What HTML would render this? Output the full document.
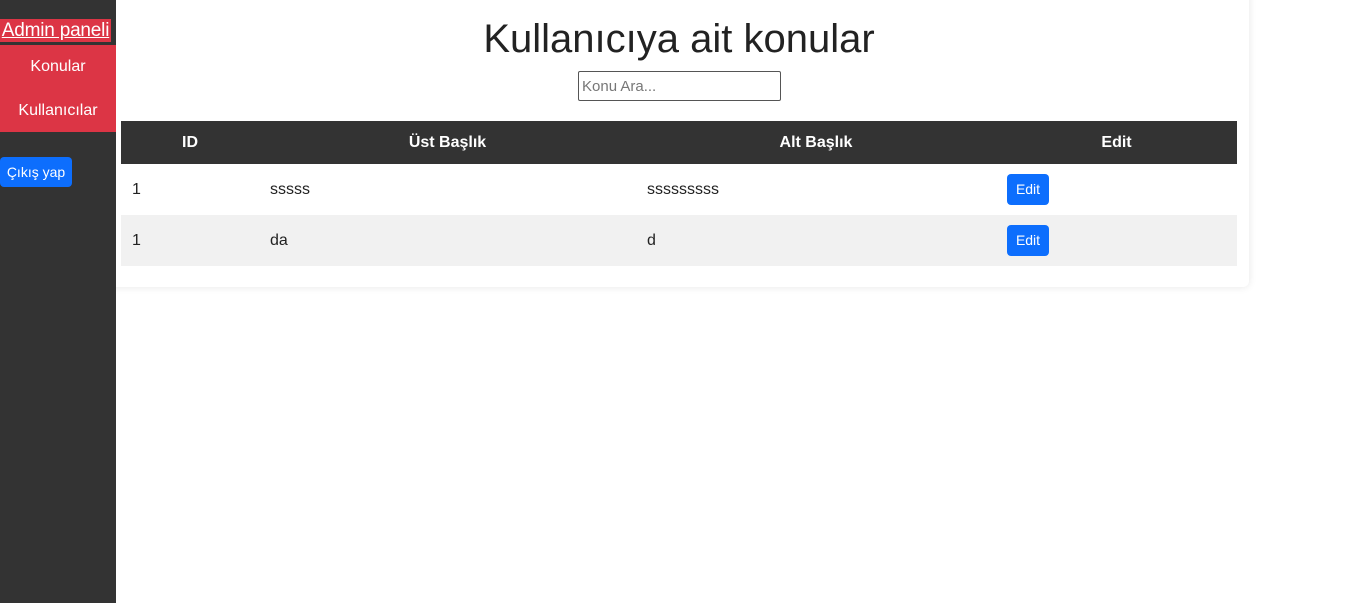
<!DOCTYPE html>
<html><head><style>
body{margin:0;width:1358px;height:603px;background:#fff;font-family:"Liberation Sans",Arial,sans-serif;position:relative;overflow:hidden}
.side{position:absolute;left:0;top:0;width:116px;height:603px;background:#333}
.adm{position:absolute;left:0;top:19px;width:111px;height:23px;background:#dc3545;color:#fff;font-size:19px;text-decoration:underline;line-height:23px;white-space:nowrap;text-align:center;letter-spacing:-0.2px}
.menu{position:absolute;left:0;top:45px;width:116px;height:87px;background:#dc3545}
.menu div{color:#fff;font-size:16px;text-align:center;height:44px;line-height:44px}
.btn{position:absolute;background:#0d6efd;color:#fff;border-radius:4px;font-size:14px;text-align:center}
.card{position:absolute;left:108px;top:-10px;width:1141px;height:297px;background:#fff;border-radius:6px;box-shadow:0 0 8px rgba(0,0,0,.1)}
h1{position:absolute;left:116px;width:1126px;top:17px;margin:0;text-align:center;font-weight:normal;font-size:40px;color:#222}
input{position:absolute;left:578px;top:71px;box-sizing:border-box;width:203px;height:30px;border:1px solid #555;border-radius:2px;font-size:15px;padding:2px 3px;font-family:"Liberation Sans",sans-serif}
input::placeholder{color:#777}
table{position:absolute;left:121px;top:121px;width:1116px;border-collapse:collapse;font-size:16px;table-layout:fixed}
th{background:#333;color:#fff;height:43px;padding:0;font-weight:bold}
td{height:51px;padding:0 11px;color:#222}
tr.g td{background:#f1f1f1}
</style></head><body>
<div class="card"></div>
<div class="side"></div>
<div class="adm">Admin paneli</div>
<div class="menu"><div>Konular</div><div>Kullanıcılar</div></div>
<div class="btn" style="left:0;top:157px;width:72px;height:30px;line-height:30px">Çıkış yap</div>
<h1>Kullanıcıya ait konular</h1>
<input placeholder="Konu Ara...">
<table>
<colgroup><col style="width:138px"><col style="width:377px"><col style="width:360px"><col style="width:241px"></colgroup>
<tr><th>ID</th><th>Üst Başlık</th><th>Alt Başlık</th><th>Edit</th></tr>
<tr><td>1</td><td>sssss</td><td>sssssssss</td><td><span class="btn" style="position:static;display:inline-block;width:42px;height:31px;line-height:31px">Edit</span></td></tr>
<tr class="g"><td>1</td><td>da</td><td>d</td><td><span class="btn" style="position:static;display:inline-block;width:42px;height:31px;line-height:31px">Edit</span></td></tr>
</table>
</body></html>
